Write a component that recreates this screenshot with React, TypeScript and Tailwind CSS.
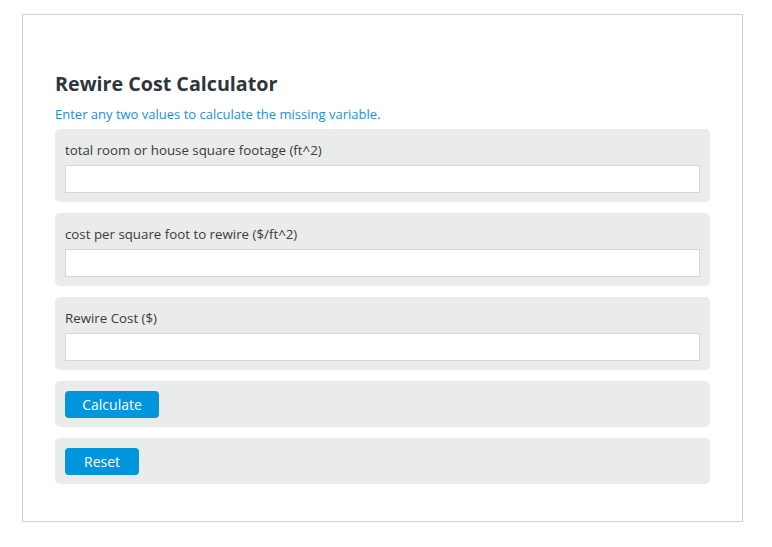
import React from "react";

const font = { fontFamily: '"Open Sans", "Noto Sans", sans-serif' };

function Field({ label }: { label: string }) {
  return (
    <div className="bg-[#eaebeb] rounded-[5px] px-[10px] pt-[12px] pb-[9px]">
      <div className="text-[13.3px] leading-[18px] text-[#3a3a3a] mb-[6px]">{label}</div>
      <input
        type="text"
        className="block w-full h-[28px] bg-white border border-[#d6d6d6] outline-none px-2 text-[13px]"
      />
    </div>
  );
}

function ButtonRow({ label, w }: { label: string; w: string }) {
  return (
    <div className="bg-[#eaebeb] rounded-[5px] px-[10px] pt-[10px] pb-[9px]">
      <button
        className={`${w} h-[27px] bg-[#0095dc] rounded-[4px] text-white text-[14px] leading-[27px] text-center`}
      >
        {label}
      </button>
    </div>
  );
}

export default function App() {
  return (
    <div className="w-[772px] h-[547px] bg-white pt-[14px] pl-[22px]" style={font}>
      <div className="w-[721px] h-[508px] border border-[#cfcfd2] bg-white pl-[32px] pr-[32px] pt-[55px]">
        <h1 className="text-[19.7px] leading-[28px] font-bold text-[#2e353b]">Rewire Cost Calculator</h1>
        <p className="text-[13px] leading-[18px] text-[#1a8fd6] mt-[7px] mb-[6px]">
          Enter any two values to calculate the missing variable.
        </p>
        <div className="flex flex-col gap-[11px]">
          <Field label="total room or house square footage (ft^2)" />
          <Field label="cost per square foot to rewire ($/ft^2)" />
          <Field label="Rewire Cost ($)" />
          <ButtonRow label="Calculate" w="w-[94px]" />
          <ButtonRow label="Reset" w="w-[74px]" />
        </div>
      </div>
    </div>
  );
}
